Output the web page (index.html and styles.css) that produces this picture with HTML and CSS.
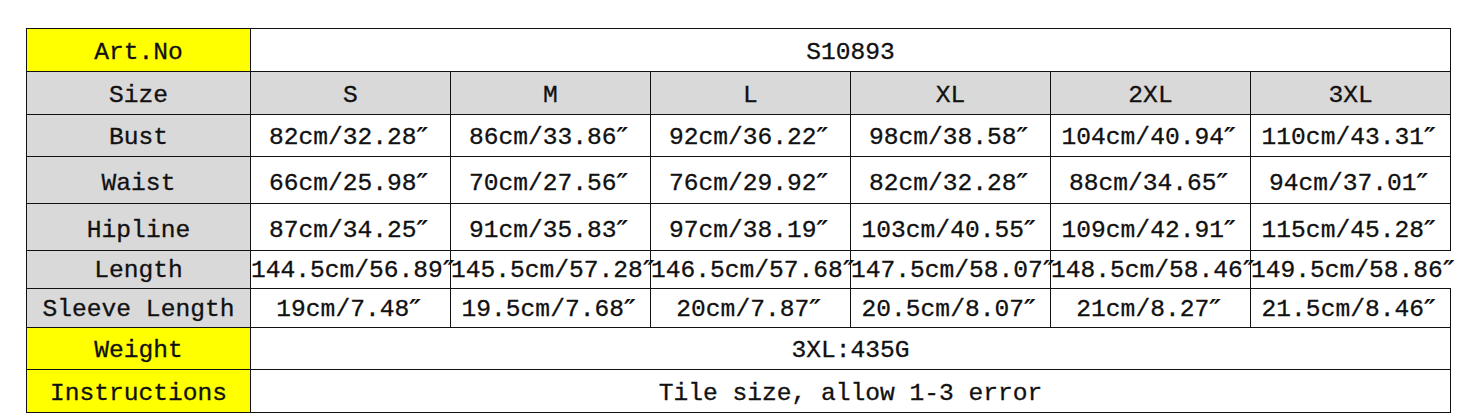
FILE: index.html
```html
<!DOCTYPE html>
<html>
<head>
<meta charset="utf-8">
<link rel="stylesheet" href="styles.css">
</head>
<body>
<div class="wrap">
<table class="size-table">
  <colgroup>
    <col class="c-label">
    <col class="c-size"><col class="c-size"><col class="c-size"><col class="c-size"><col class="c-size"><col class="c-size">
  </colgroup>
  <tr class="r-art">
    <td class="label yellow">Art.No</td>
    <td colspan="6">S10893</td>
  </tr>
  <tr class="r-size gray">
    <td class="label">Size</td>
    <td>S</td><td>M</td><td>L</td><td>XL</td><td>2XL</td><td>3XL</td>
  </tr>
  <tr class="r-bust">
    <td class="label gray">Bust</td>
    <td>82cm/32.28<span class="in">″</span></td><td>86cm/33.86<span class="in">″</span></td><td>92cm/36.22<span class="in">″</span></td><td>98cm/38.58<span class="in">″</span></td><td>104cm/40.94<span class="in">″</span></td><td>110cm/43.31<span class="in">″</span></td>
  </tr>
  <tr class="r-waist">
    <td class="label gray">Waist</td>
    <td>66cm/25.98<span class="in">″</span></td><td>70cm/27.56<span class="in">″</span></td><td>76cm/29.92<span class="in">″</span></td><td>82cm/32.28<span class="in">″</span></td><td>88cm/34.65<span class="in">″</span></td><td>94cm/37.01<span class="in">″</span></td>
  </tr>
  <tr class="r-hip">
    <td class="label gray">Hipline</td>
    <td>87cm/34.25<span class="in">″</span></td><td>91cm/35.83<span class="in">″</span></td><td>97cm/38.19<span class="in">″</span></td><td>103cm/40.55<span class="in">″</span></td><td>109cm/42.91<span class="in">″</span></td><td>115cm/45.28<span class="in">″</span></td>
  </tr>
  <tr class="r-length">
    <td class="label gray">Length</td>
    <td>144.5cm/56.89<span class="in">″</span></td><td>145.5cm/57.28<span class="in">″</span></td><td>146.5cm/57.68<span class="in">″</span></td><td>147.5cm/58.07<span class="in">″</span></td><td>148.5cm/58.46<span class="in">″</span></td><td class="open-right">149.5cm/58.86<span class="in">″</span></td>
  </tr>
  <tr class="r-sleeve">
    <td class="label gray">Sleeve Length</td>
    <td>19cm/7.48<span class="in">″</span></td><td>19.5cm/7.68<span class="in">″</span></td><td>20cm/7.87<span class="in">″</span></td><td>20.5cm/8.07<span class="in">″</span></td><td>21cm/8.27<span class="in">″</span></td><td>21.5cm/8.46<span class="in">″</span></td>
  </tr>
  <tr class="r-weight">
    <td class="label yellow">Weight</td>
    <td colspan="6">3XL:435G</td>
  </tr>
  <tr class="r-instr">
    <td class="label yellow">Instructions</td>
    <td colspan="6">Tile size, allow 1-3 error</td>
  </tr>
</table>
</div>
</body>
</html>
```

FILE: styles.css
```css
html, body {
  margin: 0;
  padding: 0;
  background: #ffffff;
}
.wrap {
  padding: 28px 0 0 26px;
}
.size-table {
  border-collapse: collapse;
  table-layout: fixed;
  width: 1425px;
  font-family: "Liberation Mono", "DejaVu Sans Mono", monospace;
  font-size: 24.6px;
  color: #111111;
  -webkit-text-stroke: 0.3px #111111;
}
.c-label { width: 224px; }
.c-size { width: 200px; }
.size-table td {
  border: 1px solid #111111;
  padding: 0;
  text-align: center;
  vertical-align: middle;
  white-space: nowrap;
  line-height: 1;
  overflow: visible;
}
.size-table td.open-right {
  border-right: none;
}
.in {
  display: inline-block;
  width: 0.6em;
  text-align: left;
  font-family: "DejaVu Serif", serif;
  font-style: italic;
  font-weight: bold;
  font-size: 1.05em;
  line-height: 1;
  vertical-align: top;
  margin-top: -1px;
  -webkit-text-stroke: 0;
}
.yellow { background: #ffff00; }
.gray, .gray td { background: #d9d9d9; }
.r-art td { height: 36px; padding-top: 6px; }
.r-size td { height: 36px; padding-top: 6px; }
.r-bust td { height: 35px; padding-top: 6px; }
.r-waist td { height: 38px; padding-top: 8px; }
.r-hip td { height: 38px; padding-top: 8px; }
.r-length td { height: 33px; padding-top: 4px; }
.r-sleeve td { height: 34px; padding-top: 4px; }
.r-weight td { height: 35px; padding-top: 6px; }
.r-instr td { height: 36px; padding-top: 6px; }
```
